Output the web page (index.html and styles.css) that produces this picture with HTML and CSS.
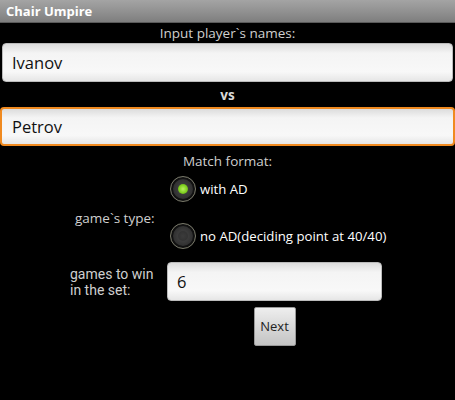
FILE: index.html
```html
<!DOCTYPE html>
<html>
<head>
<meta charset="utf-8">
<link rel="stylesheet" href="styles.css">
</head>
<body>
<div class="titlebar">Chair Umpire</div>
<div class="content">
  <div class="caption">Input player`s names:</div>
  <div class="field">Ivanov</div>
  <div class="vs">vs</div>
  <div class="field focused">Petrov</div>
  <div class="caption format">Match format:</div>
  <div class="grid">
    <div class="label type-label">game`s type:</div>
    <div class="radios">
      <div class="radio-row">
        <span class="radio checked"><span class="dot"></span></span>
        <span class="radio-text">with AD</span>
      </div>
      <div class="radio-row">
        <span class="radio"><span class="dot"></span></span>
        <span class="radio-text">no AD(deciding point at 40/40)</span>
      </div>
    </div>
    <div class="label games-label">games to win<br>in the set:</div>
    <div class="field small">6</div>
    <div></div>
    <div class="btn-wrap"><div class="btn">Next</div></div>
  </div>
</div>
</body>
</html>
```
FILE: styles.css
```css
html, body {
  margin: 0;
  padding: 0;
  background: #000;
  width: 455px;
  height: 400px;
  overflow: hidden;
}
body {
  font-family: "Open Sans", "DejaVu Sans", sans-serif;
  color: #e0e0e0;
}
.titlebar {
  height: 23px;
  background: linear-gradient(#a4a4a4, #8e8e8e 60%, #7e7e7e);
  color: #fff;
  font-weight: bold;
  font-size: 13px;
  line-height: 23px;
  padding-left: 6px;
  border-bottom: 1px solid #5a5a5a;
  box-sizing: border-box;
}
.content {
  display: flex;
  flex-direction: column;
  padding: 0 2px;
}
.caption {
  text-align: center;
  font-size: 13.5px;
  color: #cfcfcf;
  height: 20px;
  line-height: 21px;
}
.field {
  height: 39px;
  box-sizing: border-box;
  border-radius: 4px;
  background: linear-gradient(#dcdcdc, #f4f4f4 25%, #f8f8f8 75%, #e6e6e6);
  border: 1px solid #bbb;
  color: #111;
  font-size: 16.5px;
  line-height: 37px;
  padding-left: 9px;
}
.focused {
  border: 2px solid #f08a20;
  line-height: 35px;
  margin: 0 -2px;
  padding-left: 10px;
}
.vs {
  text-align: center;
  font-size: 13.5px;
  font-weight: bold;
  color: #d8d8d8;
  height: 25px;
  line-height: 27px;
}
.format {
  margin-top: 3px;
  height: 24px;
  line-height: 24px;
}
.grid {
  display: grid;
  grid-template-columns: 165px 215px;
  align-items: center;
  padding-top: 2px;
}
.label {
  font-size: 13.5px;
  color: #cfcfcf;
  line-height: 15.5px;
}
.type-label {
  padding-left: 73px;
}
.games-label {
  padding-left: 68px;
  font-family: Roboto, "Open Sans", sans-serif;
  font-size: 14px;
  line-height: 16px;
}
.radios {
  display: flex;
  flex-direction: column;
  gap: 21px;
  padding: 1px 0 13px;
}
.radio-row {
  display: flex;
  align-items: center;
  white-space: nowrap;
}
.radio {
  flex-shrink: 0;
  width: 26px;
  height: 26px;
  box-sizing: border-box;
  border-radius: 50%;
  border: 1px solid #7a7a6a;
  background: radial-gradient(circle, #4a4a4a 0, #2a2a2a 70%, #1a1a1a 100%);
  margin-left: 3px;
  display: flex;
  align-items: center;
  justify-content: center;
  box-shadow: inset 0 0 0 2px #111;
}
.radio .dot {
  width: 10px;
  height: 10px;
  border-radius: 50%;
  background: radial-gradient(circle, #3c3c3c, #2e2e2e);
}
.radio.checked .dot {
  background: radial-gradient(circle, #b8f060 0, #80d020 55%, #4a8a10 100%);
}
.radio-text {
  margin-left: 4px;
  font-size: 13.2px;
  color: #fff;
}
.small {
  font-size: 16.5px;
}
.btn-wrap {
  display: flex;
  justify-content: center;
  padding-top: 6px;
}
.btn {
  width: 42px;
  height: 39px;
  box-sizing: border-box;
  border: 1px solid #999;
  background: linear-gradient(#eeeeee, #d4d4d4 60%, #c4c4c4);
  color: #222;
  font-size: 13px;
  line-height: 37px;
  text-align: center;
  border-radius: 2px;
}
```
